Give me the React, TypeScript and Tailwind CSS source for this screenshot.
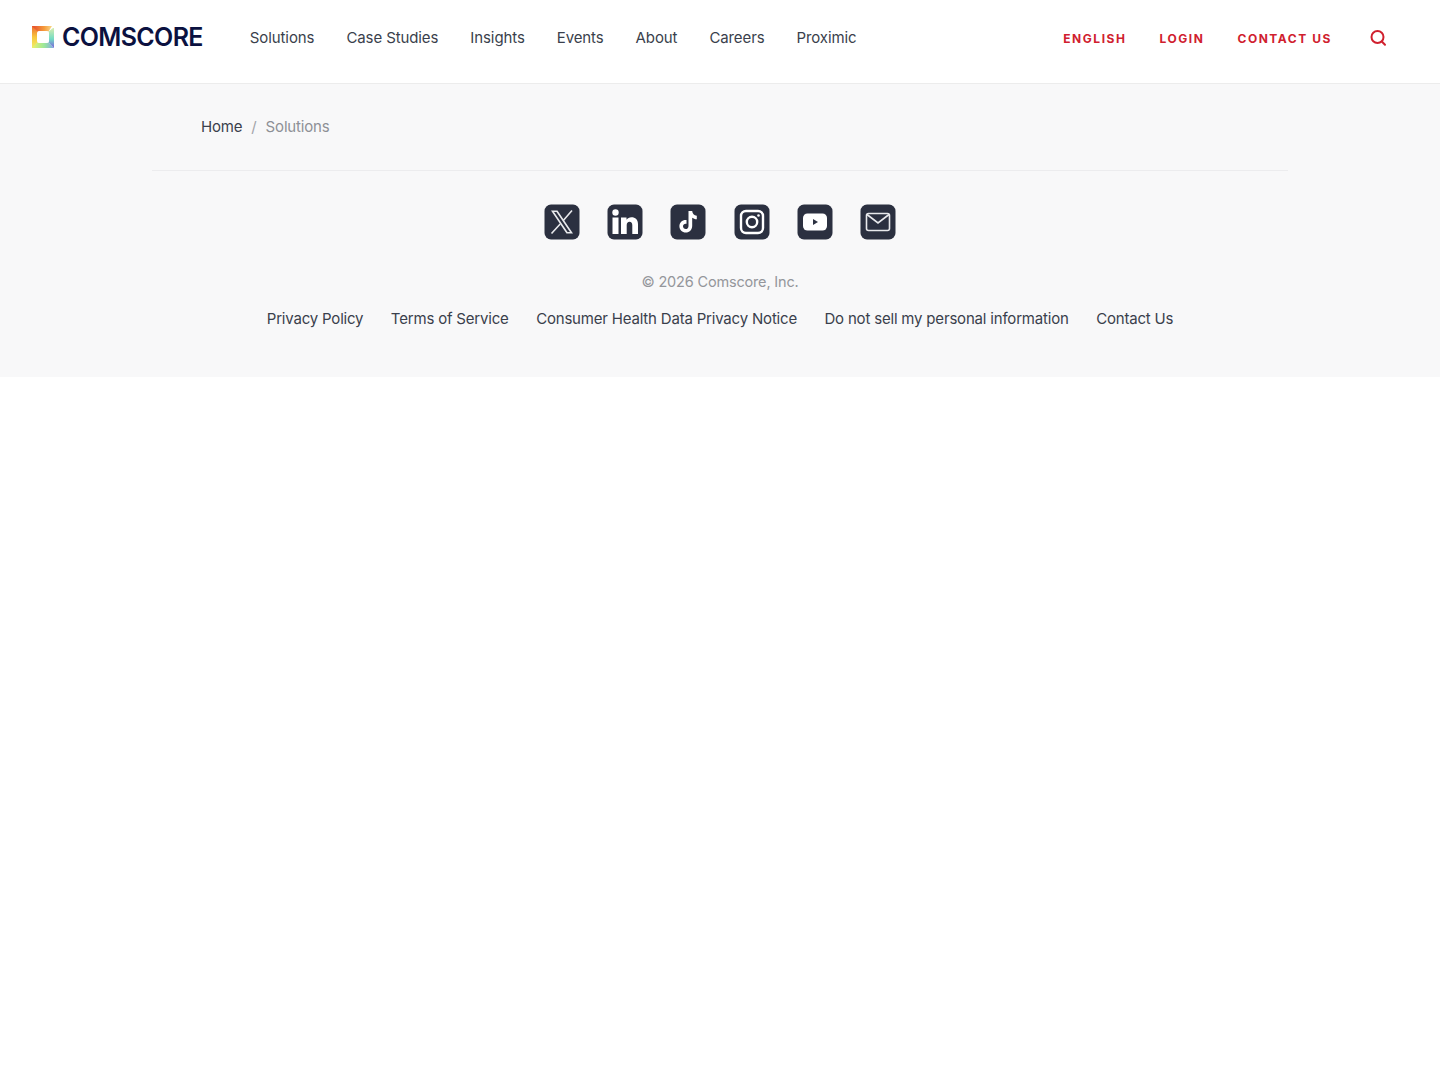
const navLinks = ["Solutions", "Case Studies", "Insights", "Events", "About", "Careers", "Proximic"];
const utilityLinks = ["ENGLISH", "LOGIN", "CONTACT US"];
const footerLinks = [
  "Privacy Policy",
  "Terms of Service",
  "Consumer Health Data Privacy Notice",
  "Do not sell my personal information",
  "Contact Us",
];

function Logo() {
  return (
    <a className="flex items-center" href="#">
      <svg width="22" height="22" viewBox="0 0 22 22" className="mr-[8px]">
        <defs>
          <linearGradient id="logoTop" x1="0" y1="0" x2="1" y2="0">
            <stop offset="0" stopColor="#e5482f" />
            <stop offset="0.6" stopColor="#f59a3a" />
            <stop offset="1" stopColor="#f9d98a" />
          </linearGradient>
          <linearGradient id="logoLeft" x1="0" y1="0" x2="0" y2="1">
            <stop offset="0" stopColor="#ee6a30" />
            <stop offset="0.5" stopColor="#f8c63d" />
            <stop offset="1" stopColor="#eef06a" />
          </linearGradient>
          <linearGradient id="logoBottom" x1="0" y1="0" x2="1" y2="0">
            <stop offset="0" stopColor="#eef06a" />
            <stop offset="0.55" stopColor="#9be89a" />
            <stop offset="1" stopColor="#7fa8e8" />
          </linearGradient>
          <linearGradient id="logoRight" x1="0" y1="0" x2="0" y2="1">
            <stop offset="0" stopColor="#d8ecb0" />
            <stop offset="0.55" stopColor="#72dcc4" />
            <stop offset="1" stopColor="#7b5fdc" />
          </linearGradient>
        </defs>
        <path d="M0 0H20L16.5 5.5H5.5L5.5 16.5L0 18Z" fill="url(#logoTop)" />
        <path d="M0 0L5.5 5.5V16.5L2 22H0Z" fill="url(#logoLeft)" />
        <path d="M0 22L5.5 16.5H16.5L22 22Z" fill="url(#logoBottom)" />
        <path d="M16.5 5.5L21 2H22V22L16.5 16.5Z" fill="url(#logoRight)" />
        <rect x="5" y="5" width="12" height="12" rx="2.5" fill="#ffffff" />
      </svg>
      <span className="text-[25px] font-semibold leading-none tracking-[-0.65px] text-[#0b1140]">COMSCORE</span>
    </a>
  );
}

function Header() {
  return (
    <header className="flex h-[84px] items-start justify-between border-b border-[#ececec] bg-white pl-[32px] pr-[53px] pt-[24px]">
      <div className="flex h-[26px] items-center">
        <Logo />
        <nav className="ml-[47px] flex gap-[32px] pt-[2px] text-[15px] leading-[26px] tracking-[-0.1px] text-[#3a3f4c]">
          {navLinks.map((link) => (
            <a key={link} href="#">
              {link}
            </a>
          ))}
        </nav>
      </div>
      <div className="flex h-[28px] items-center">
        <div className="flex gap-[33px] pt-[1px] text-[12px] font-bold leading-[26px] tracking-[1.55px] text-[#d0202e]">
          {utilityLinks.map((link) => (
            <a key={link} href="#">
              {link}
            </a>
          ))}
        </div>
        <svg width="18" height="18" viewBox="0 0 18 18" className="ml-[37px] text-[#d0202e]" fill="none" stroke="currentColor" strokeWidth="2" strokeLinecap="round">
          <circle cx="8.5" cy="8" r="6" />
          <path d="M12.8 12.5L16 15.8" />
        </svg>
      </div>
    </header>
  );
}

function SocialIcon({ children }: { children: React.ReactNode }) {
  return (
    <a href="#" className="block h-[36px] w-[36px]">
      <svg viewBox="0 0 36 36" className="h-[36px] w-[36px]">
        <rect x="0.5" y="0.5" width="35" height="35" rx="6.5" fill="#2b3040" />
        {children}
      </svg>
    </a>
  );
}

function Footer() {
  return (
    <footer className="bg-[#f8f8f9]">
      <div className="mx-auto h-[87px] w-[1136px] border-b border-[#ececee]">
        <div className="flex pl-[49px] pt-[31px] text-[15px] leading-[24px] tracking-[-0.17px]">
          <a href="#" className="text-[#3a3f4c]">
            Home
          </a>
          <span className="mx-[9px] text-[#a2a4a9]">/</span>
          <span className="text-[#8e9096]">Solutions</span>
        </div>
      </div>
      <div className="mt-[33px] flex justify-center gap-[27.2px]">
        <SocialIcon>
          <path
            d="M7 6.5H13.5L29 29.5H22.5Z M10 8L23.5 28H26L12.5 8Z"
            fill="#e8e9ec"
            fillRule="evenodd"
          />
          <path d="M28 6.5L19.5 16.2M16.2 20L7.5 29.5" stroke="#e8e9ec" strokeWidth="1.6" fill="none" />
        </SocialIcon>
        <SocialIcon>
          <circle cx="8.5" cy="8.5" r="3.2" fill="#ffffff" />
          <rect x="5.5" y="13.5" width="6" height="16.5" fill="#ffffff" />
          <path
            d="M14 13.5H19.5V15.8C20.6 14.2 22.3 13.2 24.4 13.2C28.4 13.2 31 15.6 31 20.2V30H25.3V21.2C25.3 19 24.4 17.8 22.6 17.8C20.7 17.8 19.7 19.1 19.7 21.2V30H14Z"
            fill="#ffffff"
          />
        </SocialIcon>
        <SocialIcon>
          <path
            d="M18.5 7H22.2C22.4 9.6 24 11.4 26.8 11.7V15.2C24.9 15.2 23.4 14.6 22.2 13.7V21.8C22.2 25.9 19.4 28.6 15.8 28.6C12.2 28.6 9.4 25.8 9.4 22.3C9.4 18.5 12.6 15.6 16.5 16.1V19.8C14.6 19.3 13 20.6 13 22.3C13 23.8 14.2 25 15.7 25C17.3 25 18.5 23.8 18.5 21.9Z"
            fill="#ffffff"
          />
        </SocialIcon>
        <SocialIcon>
          <rect x="7" y="7" width="22" height="22" rx="5" fill="none" stroke="#ffffff" strokeWidth="2.4" />
          <circle cx="18" cy="18" r="5.2" fill="none" stroke="#ffffff" strokeWidth="2.4" />
          <circle cx="24.5" cy="11.5" r="1.3" fill="#ffffff" />
        </SocialIcon>
        <SocialIcon>
          <rect x="6" y="9.5" width="24" height="17" rx="4.5" fill="#ffffff" />
          <path d="M16 15L21 18L16 21Z" fill="#2b3040" />
        </SocialIcon>
        <SocialIcon>
          <rect x="6.5" y="9.5" width="23" height="17" rx="2" fill="none" stroke="#e8e9ec" strokeWidth="1.6" />
          <path d="M7 10.5L18 19L29 10.5" fill="none" stroke="#e8e9ec" strokeWidth="1.6" />
        </SocialIcon>
      </div>
      <p className="mt-[30px] text-center text-[14.5px] leading-[24px] tracking-[-0.17px] text-[#94969b]">© 2026 Comscore, Inc.</p>
      <div className="mt-[13px] flex justify-center gap-[27.5px] pb-[46px] text-[15px] leading-[24px] tracking-[-0.19px] text-[#3a3f4c]">
        {footerLinks.map((link) => (
          <a key={link} href="#">
            {link}
          </a>
        ))}
      </div>
    </footer>
  );
}

export default function App() {
  return (
    <div className="min-h-[1080px] bg-white font-['Inter',sans-serif]">
      <Header />
      <Footer />
    </div>
  );
}
